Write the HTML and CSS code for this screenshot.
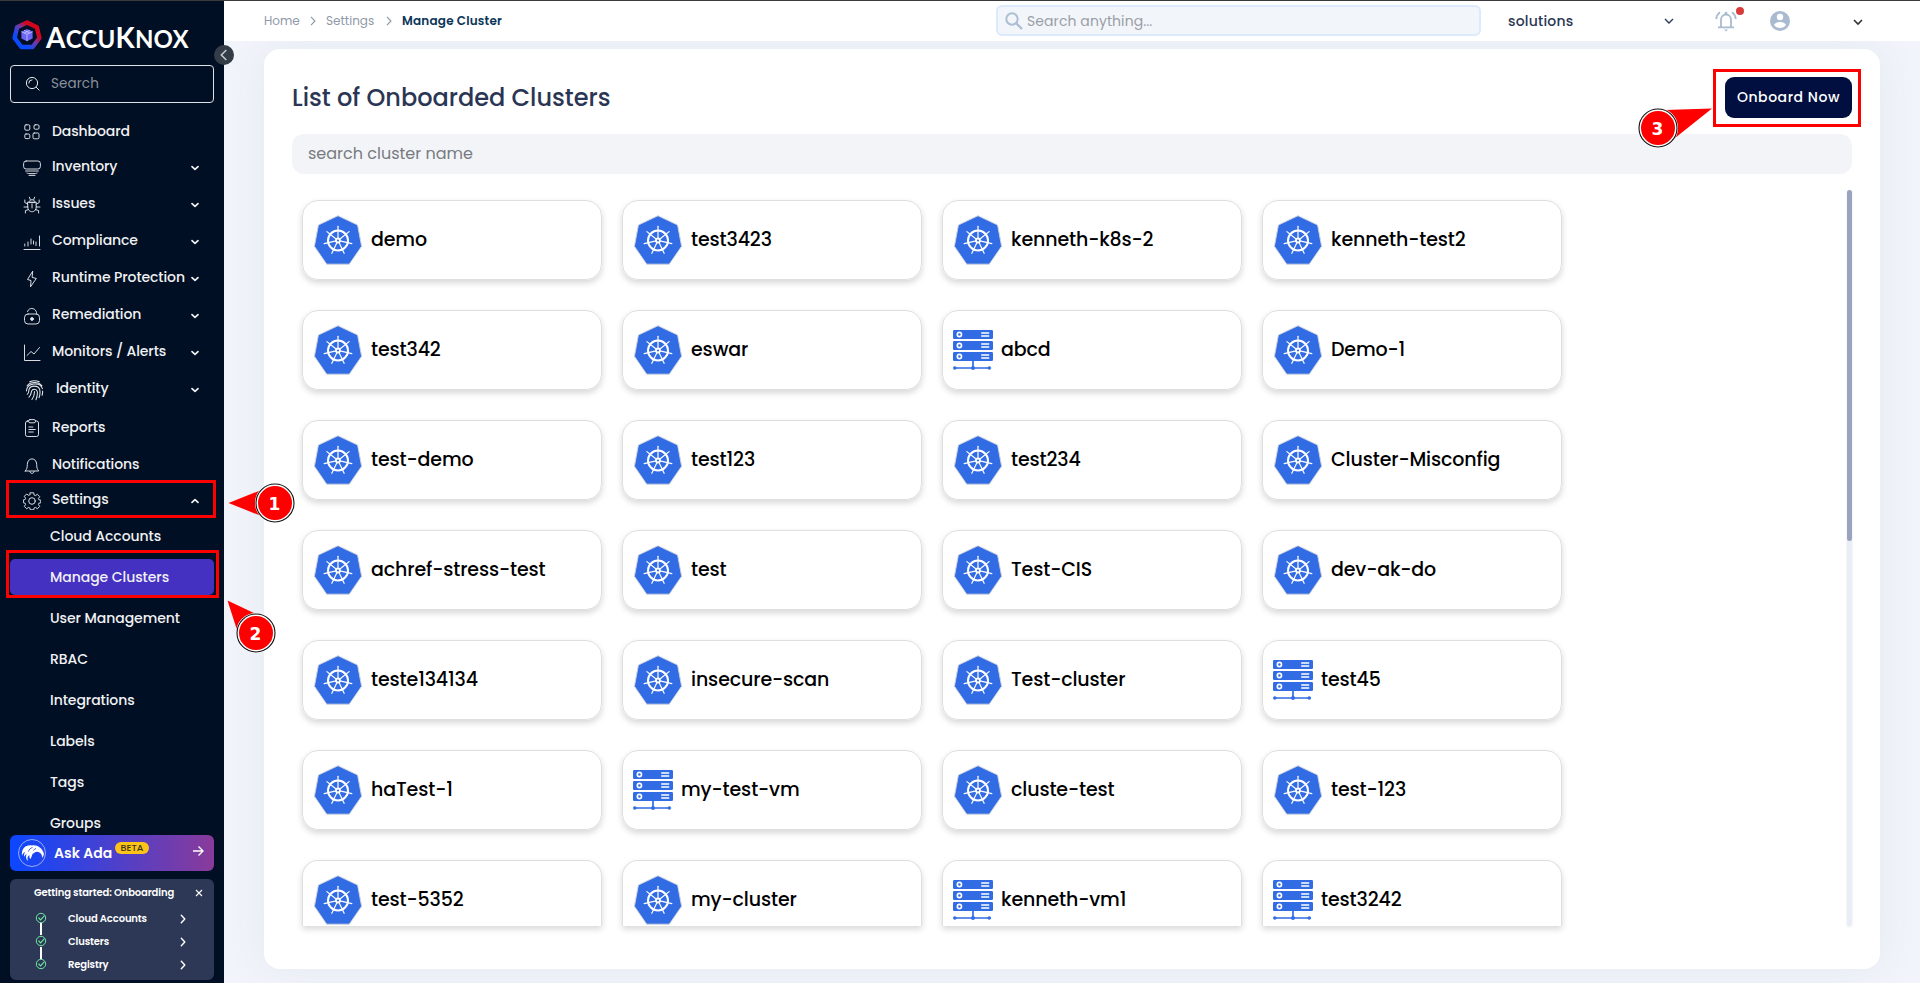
FILE: index.html
```html
<!DOCTYPE html>
<html lang="en">
<head>
<meta charset="utf-8">
<title>Manage Cluster</title>
<link rel="stylesheet" href="styles.css">
</head>
<body>
<svg class="defs" width="0" height="0">
  <symbol id="k8s" viewBox="0 0 48 50">
    <path d="M24 .7 43.6 10 47.6 31.3 35.3 49.2H12.7L.4 31.3 4.4 10Z" fill="#326ce5" stroke="#cfd3dc" stroke-width="1" stroke-linejoin="round"/>
    <g fill="none" stroke="#fff" stroke-linecap="round">
      <circle cx="24" cy="25.5" r="10" stroke-width="2"/>
      <g stroke-width="1.2">
        <path d="M24 23.5V11.3"/>
        <path d="M24 23.5V11.3" transform="rotate(51.43 24 25.5)"/>
        <path d="M24 23.5V11.3" transform="rotate(102.86 24 25.5)"/>
        <path d="M24 23.5V11.3" transform="rotate(154.29 24 25.5)"/>
        <path d="M24 23.5V11.3" transform="rotate(205.71 24 25.5)"/>
        <path d="M24 23.5V11.3" transform="rotate(257.14 24 25.5)"/>
        <path d="M24 23.5V11.3" transform="rotate(308.57 24 25.5)"/>
      </g>
      <circle cx="24" cy="25.5" r="2" stroke-width="1.8"/>
    </g>
  </symbol>
  <symbol id="vm" viewBox="0 0 40 40">
    <g fill="#326ce5"><rect width="40" height="9" rx="1.2"/><rect y="11" width="40" height="9" rx="1.2"/><rect y="22" width="40" height="9" rx="1.2"/>
    <circle cx="1.8" cy="38" r="1.8"/><circle cx="20" cy="38" r="2"/><circle cx="36.3" cy="38" r="1.8"/></g>
    <g fill="none" stroke="#fff" stroke-width="1.6"><circle cx="6.4" cy="4.5" r="2.1"/><circle cx="6.4" cy="15.5" r="2.1"/><circle cx="6.4" cy="26.5" r="2.1"/>
    <path d="M28.2 3h8M28.2 6h8M28.2 14h8M28.2 17h8M28.2 25h8M28.2 28h8"/></g>
    <path d="M20 31v7M2 38h35" stroke="#326ce5" stroke-width="1.7" fill="none"/>
  </symbol>
  <symbol id="down" viewBox="0 0 10 10"><path d="M2 3.6 5 6.4 8 3.6" fill="none" stroke="currentColor" stroke-width="1.7" stroke-linecap="round" stroke-linejoin="round"/></symbol>
  <symbol id="right" viewBox="0 0 10 10"><path d="M3.3 1.2 6.8 5 3.3 8.8" fill="none" stroke="currentColor" stroke-width="1.4" stroke-linecap="round" stroke-linejoin="round"/></symbol>
  <symbol id="crumb" viewBox="0 0 10 10"><path d="M3.3 1.6 6.6 5 3.3 8.4" fill="none" stroke="currentColor" stroke-width="1"/></symbol>
  <symbol id="check" viewBox="0 0 12 12"><path d="M3.8 6l1.8 1.9 3.600-4" fill="none" stroke="#6ee7a0" stroke-width="1.1" stroke-linecap="round"/><circle cx="6" cy="6" r="4.7" fill="none" stroke="#6ee7a0"/></symbol>
</svg>

<aside class="sidebar">
  <div class="brand">
    <svg width="30" height="30" viewBox="0 0 30 30">
      <defs><linearGradient id="ring" x1="0" y1="1" x2="1" y2="0"><stop offset=".25" stop-color="#0a4bff"/><stop offset=".5" stop-color="#6a3bb0"/><stop offset=".72" stop-color="#d3061d"/></linearGradient></defs>
      <path d="M15 2.4 24.9 7.2 27.4 18 20.6 27H9.4L2.6 18 5.1 7.2Z" fill="none" stroke="url(#ring)" stroke-width="4.4" stroke-linejoin="round"/>
      <path d="M15 9 20.6 11.6V18.4L15 21.2 9.4 18.4V11.6Z" fill="#6d63f5"/>
      <path d="M9.4 11.7 15 14.3l5.6-2.6M15 14.3v6.8M12 10.3l5.7 2.7M18 10.3l-5.7 2.7" fill="none" stroke="#c9c8ff" stroke-width=".8"/>
    </svg>
    <span class="brand-name">A<small>CCU</small>K<small>NOX</small></span>
  </div>
  <div class="side-search">
    <svg width="18" height="18" viewBox="0 0 18 18" fill="none" stroke="#e4e7ec" stroke-width="1"><circle cx="8" cy="8" r="5.6"/><path d="M4.8 8A3.2 3.2 0 0 1 8 4.8M12.2 12.2l3 3" stroke-linecap="round"/></svg>
    <span>Search</span>
  </div>
  <nav class="nav">
    <div class="item first"><svg class="ico" viewBox="0 0 18 18"><rect x="1.8" y="1.8" width="5" height="5.4" rx="1.2"/><rect x="11" y="1.8" width="5" height="4.4" rx="1.2"/><rect x="1.8" y="11" width="5" height="4.6" rx="1.2"/><rect x="10" y="10" width="6" height="5.8" rx="1.2"/></svg><span>Dashboard</span></div>
    <div class="item"><svg class="ico" viewBox="0 0 18 18"><rect x=".6" y="2" width="16.8" height="8" rx="2.5"/><path d="M2.6 12h12.8M4 14c1 .3 1 .6 2 .6h6c1 0 1-.3 2-.6M6 16.4h6"/></svg><span>Inventory</span><svg class="chev"><use href="#down"/></svg></div>
    <div class="item"><svg class="ico" viewBox="0 0 18 18"><path d="M6 6.2C6 2.8 12 2.8 12 6.2ZM4.8 6.2h8.4v5.2c0 5.8-8.4 5.8-8.4 0ZM9 8v4M6.4 1.2l.8 2.3M11.6 1.2l-.8 2.3M4.8 8 1.8 6.6V4M13.2 8l3-1.4V4M4.8 11H1M13.2 11H17M5.4 13.6l-3 1V17M12.6 13.6l3 1V17"/></svg><span>Issues</span><svg class="chev"><use href="#down"/></svg></div>
    <div class="item"><svg class="ico" viewBox="0 0 18 18"><path d="M1 16.5h16M1.8 11v2M5 9v4M8 6v5M10.5 8v3M13 9v3.500M16.500 3v10"/></svg><span>Compliance</span><svg class="chev"><use href="#down"/></svg></div>
    <div class="item"><svg class="ico" viewBox="0 0 18 18"><path d="M9.500 1.500 4.500 9.500 8 10.500 7.500 16.800 13.300 8.500 9.500 7.500Z"/></svg><span>Runtime Protection</span><svg class="chev"><use href="#down"/></svg></div>
    <div class="item"><svg class="ico" viewBox="0 0 18 18"><rect x="1.500" y="7" width="15" height="10" rx="3.500"/><path d="M4.500 4.500C5.500-.2 14 .3 13.700 7"/><circle cx="9" cy="12" r="1.400" fill="#e4e7ec"/></svg><span>Remediation</span><svg class="chev"><use href="#down"/></svg></div>
    <div class="item"><svg class="ico" viewBox="0 0 18 18"><path d="M1.500 1v15.500H17M4 11.500 8 7.500l3 2.500 5.500-6.500"/></svg><span>Monitors / Alerts</span><svg class="chev"><use href="#down"/></svg></div>
    <div class="item wide"><svg class="ico big" viewBox="0 0 20 22"><path d="M5 1.800c3-1.400 7-1.400 10 0M2.200 6c3.500-4.600 12-4.600 15.600 0M1.500 11.500C2 3 16 1.500 18.300 9M18.500 11.500c.2 1.500 0 3-.5 4.500M2.400 15c1.800-1 1.300-3 1.800-5 1.200-4.800 9.800-4.800 11.300 0 .6 3 .4 5.500-.7 8.500M4.200 18c2.400-2 2.200-4.300 2.700-6.300.8-2.800 5.300-2.800 6 .3.400 3-.2 6-1.400 8.800M7.300 20.500c2-2.500 2.700-5 2.700-8.500"/></svg><span>Identity</span><svg class="chev"><use href="#down"/></svg></div>
    <div class="item reports"><svg class="ico" viewBox="0 0 18 18"><rect x="2.500" y="2" width="13" height="15.500" rx="2"/><rect x="5.500" y=".6" width="7" height="3.200" rx="1.500" fill="#000f23"/><path d="M5.800 8h4M5.800 10.500h6.500M5.800 13h4.500"/></svg><span>Reports</span></div>
    <div class="item notif"><svg class="ico" viewBox="0 0 18 18"><path d="M2.300 14h13.400c-1.500-2-2-3-2-6.500 0-7.500-9.400-7.500-9.400 0 0 3.500-.5 4.500-2 6.500ZM6.800 14.500c.3 2.600 4.100 2.600 4.400 0"/></svg><span>Notifications</span></div>
    <div class="item settings"><svg class="ico" viewBox="0 0 18 18"><circle cx="9" cy="9" r="3.300"/><path d="M7.300.8h3.400l.5 2.300 1.200.5 2-1.300 2.300 2.300-1.300 2 .5 1.200 1.900.4v2.600l-1.900.4-.5 1.200 1.300 2-2.300 2.300-2-1.300-1.200.5-.5 1.900H7.300l-.5-1.900-1.200-.5-2 1.300-2.300-2.300 1.300-2-.5-1.200-1.700-.4V7.900l1.700-.4.5-1.200-1.300-2 2.300-2.300 2 1.300 1.200-.5Z" stroke-linejoin="round"/></svg><span>Settings</span><svg class="chev up"><use href="#down"/></svg></div>
    <div class="sub">Cloud Accounts</div>
    <div class="sub active">Manage Clusters</div>
    <div class="sub">User Management</div>
    <div class="sub">RBAC</div>
    <div class="sub">Integrations</div>
    <div class="sub">Labels</div>
    <div class="sub">Tags</div>
    <div class="sub">Groups</div>
  </nav>
  <div class="ask">
    <svg width="28" height="28" viewBox="0 0 28 28"><circle cx="14" cy="14" r="13.500" fill="none" stroke="#b9c6ff" stroke-width=".8"/><path d="M4 17C3 9 8 5.500 14 6.500c5-.8 10 2 12 8.500l-1.500 4-1-3.500c-2-3-5-3.500-7.500-1.500-2.500 1-2 4-3.500 6-1-1-1.500-2.500-1-4-2 1-2.500 3-1.500 6-2-1.500-2.500-4-1.500-7-1 .5-2 1.500-2 3-.8-1.500-.5-3 .5-5-1.500.5-2.500 2-3 4Z" fill="#fff"/><path d="M14.500 8.500c-2 .5-3.500 2-4 4M18 9.500c-1 .2-2 1-2.500 2" stroke="#3649e0" stroke-width=".9" fill="none"/></svg>
    <span class="ask-text">Ask Ada</span><span class="beta">BETA</span>
    <svg class="arrow" width="12" height="12" viewBox="0 0 12 12"><path d="M1 6h10M6.500 1.500 11 6l-4.500 4.500" fill="none" stroke="#fff" stroke-width="1.400"/></svg>
  </div>
  <section class="onboarding">
    <header><span>Getting started: Onboarding</span><svg width="8" height="8" viewBox="0 0 8 8"><path d="M1 1l6 6M7 1 1 7" stroke="#fff" stroke-width="1.100"/></svg></header>
    <div class="step"><svg class="ok"><use href="#check"/></svg><span>Cloud Accounts</span><svg class="go"><use href="#right"/></svg></div>
    <div class="step linked"><svg class="ok"><use href="#check"/></svg><span>Clusters</span><svg class="go"><use href="#right"/></svg></div>
    <div class="step linked"><svg class="ok"><use href="#check"/></svg><span>Registry</span><svg class="go"><use href="#right"/></svg></div>
  </section>
</aside>

<main class="main">
  <header class="topbar">
    <div class="crumbs"><span class="c1">Home</span><svg><use href="#crumb"/></svg><span class="c2">Settings</span><svg><use href="#crumb"/></svg><b>Manage Cluster</b></div>
    <div class="top-search"><svg width="18" height="18" viewBox="0 0 18 18" fill="none" stroke="#aabfd4" stroke-width="2"><circle cx="7" cy="7" r="5.700"/><path d="m11 11 6 6" stroke-width="2.300"/></svg><span>Search anything...</span></div>
    <div class="tenant"><span>solutions</span><svg width="10" height="10" viewBox="0 0 10 10"><path d="m1 3 4 4 4-4" fill="none" stroke="#2b3a5c" stroke-width="1.400"/></svg></div>
    <div class="bell"><svg width="22" height="22" viewBox="0 0 22 22" fill="none" stroke="#aabbd0" stroke-width="1.800"><path d="M6 17V9.500C6 3 16 3 16 9.500V17M3 17.400h16M1.300 9C1.500 6 2.700 3.800 5 2.200M20.700 9C20.500 6 19.300 3.800 17 2.200"/><path d="M9.500 2.800 11 1.500l1.500 1.300v1.500h-3ZM9 19.500h4l-2 2Z" fill="#aabbd0" stroke="none"/></svg><i></i></div>
    <svg class="avatar" width="20" height="20" viewBox="0 0 20 20"><circle cx="10" cy="10" r="10" fill="#aabbd0"/><circle cx="10" cy="6" r="3.200" fill="#fff"/><path d="M4 14c1.500-4 10.500-4 12 0-3 4-9 4-12 0Z" fill="#fff"/></svg>
    <svg class="caret" width="10" height="10" viewBox="0 0 10 10"><path d="m1 3 4 4 4-4" fill="none" stroke="#333" stroke-width="1.600"/></svg>
  </header>
  <section class="panel">
    <div class="panel-head"><h1>List of Onboarded Clusters</h1><button class="onboard">Onboard Now</button></div>
    <div class="filter">search cluster name</div>
    <div class="list">
      <div class="grid">
        <div class="card"><svg class="k"><use href="#k8s"/></svg><span>demo</span></div>
        <div class="card"><svg class="k"><use href="#k8s"/></svg><span>test3423</span></div>
        <div class="card"><svg class="k"><use href="#k8s"/></svg><span>kenneth-k8s-2</span></div>
        <div class="card"><svg class="k"><use href="#k8s"/></svg><span>kenneth-test2</span></div>
        <div class="card"><svg class="k"><use href="#k8s"/></svg><span>test342</span></div>
        <div class="card"><svg class="k"><use href="#k8s"/></svg><span>eswar</span></div>
        <div class="card"><svg class="v"><use href="#vm"/></svg><span>abcd</span></div>
        <div class="card"><svg class="k"><use href="#k8s"/></svg><span>Demo-1</span></div>
        <div class="card"><svg class="k"><use href="#k8s"/></svg><span>test-demo</span></div>
        <div class="card"><svg class="k"><use href="#k8s"/></svg><span>test123</span></div>
        <div class="card"><svg class="k"><use href="#k8s"/></svg><span>test234</span></div>
        <div class="card"><svg class="k"><use href="#k8s"/></svg><span>Cluster-Misconfig</span></div>
        <div class="card"><svg class="k"><use href="#k8s"/></svg><span>achref-stress-test</span></div>
        <div class="card"><svg class="k"><use href="#k8s"/></svg><span>test</span></div>
        <div class="card"><svg class="k"><use href="#k8s"/></svg><span>Test-CIS</span></div>
        <div class="card"><svg class="k"><use href="#k8s"/></svg><span>dev-ak-do</span></div>
        <div class="card"><svg class="k"><use href="#k8s"/></svg><span>teste134134</span></div>
        <div class="card"><svg class="k"><use href="#k8s"/></svg><span>insecure-scan</span></div>
        <div class="card"><svg class="k"><use href="#k8s"/></svg><span>Test-cluster</span></div>
        <div class="card"><svg class="v"><use href="#vm"/></svg><span>test45</span></div>
        <div class="card"><svg class="k"><use href="#k8s"/></svg><span>haTest-1</span></div>
        <div class="card"><svg class="v"><use href="#vm"/></svg><span>my-test-vm</span></div>
        <div class="card"><svg class="k"><use href="#k8s"/></svg><span>cluste-test</span></div>
        <div class="card"><svg class="k"><use href="#k8s"/></svg><span>test-123</span></div>
        <div class="card cut"><svg class="k"><use href="#k8s"/></svg><span>test-5352</span></div>
        <div class="card cut"><svg class="k"><use href="#k8s"/></svg><span>my-cluster</span></div>
        <div class="card cut"><svg class="v"><use href="#vm"/></svg><span>kenneth-vm1</span></div>
        <div class="card cut"><svg class="v"><use href="#vm"/></svg><span>test3242</span></div>
      </div>
      <div class="scroll"><div class="thumb"></div></div>
    </div>
  </section>
</main>

<div class="collapse"><svg width="10" height="12" viewBox="0 0 10 12"><path d="M7.300 1 2.300 6l5 5" fill="none" stroke="#c6cad0" stroke-width="1.500"/></svg></div>
<div class="mark mark-settings"></div>
<div class="mark mark-manage"></div>
<div class="mark mark-onboard"></div>
<svg class="callouts" width="1920" height="983" viewBox="0 0 1920 983">
  <g fill="#f00"><path d="M228.500 503 260 490.500V515.500Z"/><path d="M227.500 600.500 256 614 237 630Z"/><path d="M1712 108.500 1664 110 1675 138Z"/></g>
  <g fill="#f00" stroke="#fff" stroke-width="3"><circle cx="275" cy="503" r="18.500"/><circle cx="256" cy="633" r="18.500"/><circle cx="1658" cy="128" r="18.500"/></g>
  <g fill="none" stroke="#111" stroke-width="1.100"><circle cx="275" cy="503" r="19"/><circle cx="256" cy="633" r="19"/><circle cx="1658" cy="128" r="19"/></g>
  <g class="num"><text x="274.500" y="510">1</text><text x="255.500" y="640">2</text><text x="1657.500" y="135">3</text></g>
</svg>
</body>
</html>
```
FILE: styles.css
```css
* { box-sizing: border-box; }
body {
  margin: 0; width: 1920px; height: 983px; overflow: hidden; position: relative;
  display: flex; border-top: 1px solid #3a3a3c; background: #f1f4fa;
  font-family: Poppins, Inter, "Open Sans", sans-serif;
}
.defs { position: absolute; }
svg { flex: none; display: block; }

/* Sidebar */
.sidebar { width: 224px; height: 982px; background: #000f23; color: #f0f1f4; display: flex; flex-direction: column; padding: 19px 10px 3px; }
.brand { display: flex; height: 30px; padding-left: 2px; gap: 4px; }
.brand-name { font: 700 28px/30px Lato, sans-serif; color: #fff; white-space: nowrap; letter-spacing: .2px; padding-top: 2px; }
.brand-name small { font-size: 24px; }
.side-search { margin-top: 15px; height: 38px; border: 1px solid #dfe2e6; border-radius: 4px; display: flex; align-items: center; padding-left: 13px; gap: 9px; color: #8b929e; font-size: 13.500px; letter-spacing: .1px; }
.nav { margin-top: 9.500px; height: 723px; overflow: hidden; }
.item { height: 37px; display: flex; align-items: center; font-size: 14px; font-weight: 500; letter-spacing: -.09px; padding: 0 14px 0 13px; white-space: nowrap; }
.item span { flex: 1; }
.item.first { height: 35.500px; }
.item.first span, .item.reports span, .item.notif span, .item.settings span { padding-top: 2px; }
.item.reports { height: 39px; }
.item.notif { height: 36px; }
.item.settings { height: 34px; }
.ico { width: 18px; height: 18px; margin: 4px 11px 0 0; fill: none; stroke: #e4e7ec; stroke-width: .95; stroke-linecap: round; }
.ico.big { width: 19px; height: 21px; margin: 4px 13px 0 2px; stroke-width: 1.1; }
.item.wide .ico { margin-right: 12px; }
.chev { width: 10px; height: 10px; margin-top: 4px; }
.chev.up { transform: rotate(180deg); }
.sub { height: 36px; margin-bottom: 5px; padding-left: 40px; line-height: 36px; font-size: 14px; font-weight: 500; letter-spacing: -.06px; }
.sub:nth-child(12) { margin-top: 2px; }
.sub.active { background: #4430c1; border-radius: 5px; }
.ask { height: 36px; flex: none; border-radius: 6px; background: linear-gradient(90deg, #0b47ff, #8a3a9a); display: flex; align-items: center; padding: 0 10px 0 8px; color: #fff; }
.ask-text { font-size: 14px; font-weight: 600; margin-left: 8px; width: 61px; white-space: nowrap; }
.beta { width: 34px; height: 12px; margin-bottom: 11px; border-radius: 6px; background: #fcc419; color: #3b3517; font-size: 9.500px; line-height: 12px; text-align: center; font-weight: 500; }
.arrow { margin: 0 0 4px auto; }
.onboarding { height: 101px; flex: none; margin-top: 8px; border-radius: 6px; background: #2d3856; font-size: 10px; font-weight: 600; letter-spacing: -.13px; color: #fff; padding: 0 11px 0 24px; }
.onboarding header { height: 28px; display: flex; justify-content: space-between; align-items: center; white-space: nowrap; }
.step { height: 23.300px; display: flex; align-items: center; position: relative; padding-right: 15px; }
.step span { flex: 1; margin-left: 21px; }
.ok { width: 12px; height: 12px; margin: -2px 0 0 1px; }
.go { width: 10px; height: 10px; }
.linked::before { content: ""; position: absolute; left: 6px; top: -7px; width: 2px; height: 12px; background: #fff; }

/* Top bar */
.main { flex: 1; height: 982px; }
.topbar { height: 40px; background: #fff; display: flex; align-items: center; padding-left: 40px; position: relative; z-index: 1; }
.crumbs { width: 732px; display: flex; align-items: center; font-size: 12px; color: #8f99a9; }
.crumbs svg { width: 12px; height: 12px; margin: 0 7px; }
.crumbs b { color: #0b3558; font-weight: 600; letter-spacing: .2px; }
.c1 { width: 36px; }
.c2 { width: 50px; }
.top-search { width: 485px; height: 31px; margin-top: -1px; border: 2px solid #dbeafd; border-radius: 6px; background: #f2f5fa; display: flex; align-items: center; gap: 4px; padding-left: 7px; color: #9a9ea6; font-size: 14px; letter-spacing: .08px; }
.top-search span { padding-top: 2px; }
.tenant { margin-left: 27px; width: 166px; display: flex; justify-content: space-between; align-items: center; font-size: 14px; font-weight: 500; letter-spacing: .2px; color: #2b3654; }
.bell { margin-left: 41px; position: relative; }
.bell i { position: absolute; left: 21px; top: -3px; width: 8px; height: 8px; border-radius: 50%; background: #d93b3b; }
.avatar { margin-left: 33px; }
.caret { margin: 2px 0 0 63px; }

/* Panel */
.panel { margin: 8px 40px 0; height: 920px; border-radius: 16px; background: #fff; box-shadow: 0 0 40px rgba(90, 110, 140, .08); padding: 28px 28px 0; }
.panel-head { display: flex; justify-content: space-between; }
h1 { margin: 0; font-size: 24px; font-weight: 500; line-height: 40px; padding-top: 1px; color: #2b3654; white-space: nowrap; }
.onboard { width: 127px; height: 41px; border: 0; border-radius: 9px; background: #000f3f; color: #fff; font: 500 14px Poppins, Inter, sans-serif; letter-spacing: .55px; padding: 0; }
.filter { margin-top: 16px; height: 40px; border-radius: 12px; background: #f3f4f8; color: #777b80; font-size: 16px; line-height: 39px; padding-left: 16px; }
.list { margin-top: 16px; display: flex; justify-content: space-between; height: 736px; }
.grid { display: grid; grid-template-columns: repeat(4, 300px); grid-auto-rows: 80px; gap: 30px 20px; padding: 10px 0 0 10px; height: 736px; }
.card { border: 1px solid #dedfe1; border-radius: 16px; box-shadow: 0 3px 6px rgba(0, 0, 0, .16); display: flex; align-items: center; gap: 8px; padding-left: 10px; font-size: 19px; font-weight: 500; letter-spacing: -.12px; color: #000; white-space: nowrap; }
.card span { padding-bottom: 2px; }
.card.cut { height: 66px; overflow: hidden; border-bottom: 0; border-radius: 16px 16px 0 0; padding-top: 13px; }
.k { width: 50px; height: 50px; }
.v { width: 40px; height: 40px; }
.scroll { width: 5px; border-radius: 3px; background: #e9edf6; box-shadow: 0 1px 3px rgba(0, 0, 0, .08); }
.thumb { height: 351px; border-radius: 3px; background: #99a3bf; }

/* Overlays */
.collapse { position: absolute; left: 214px; top: 44px; width: 20px; height: 20px; border-radius: 50%; background: #343c48; display: flex; align-items: center; justify-content: center; z-index: 2; }
.mark { position: absolute; border: 3px solid #f00; z-index: 2; }
.mark-settings { left: 6px; top: 479px; width: 210px; height: 38px; }
.mark-manage { left: 6px; top: 549px; width: 213px; height: 48px; }
.mark-onboard { left: 1713px; top: 68px; width: 148px; height: 58px; }
.callouts { position: absolute; left: 0; top: -1px; z-index: 3; }
.num { font: bold 17px "DejaVu Sans", sans-serif; fill: #fff; text-anchor: middle; }
```
